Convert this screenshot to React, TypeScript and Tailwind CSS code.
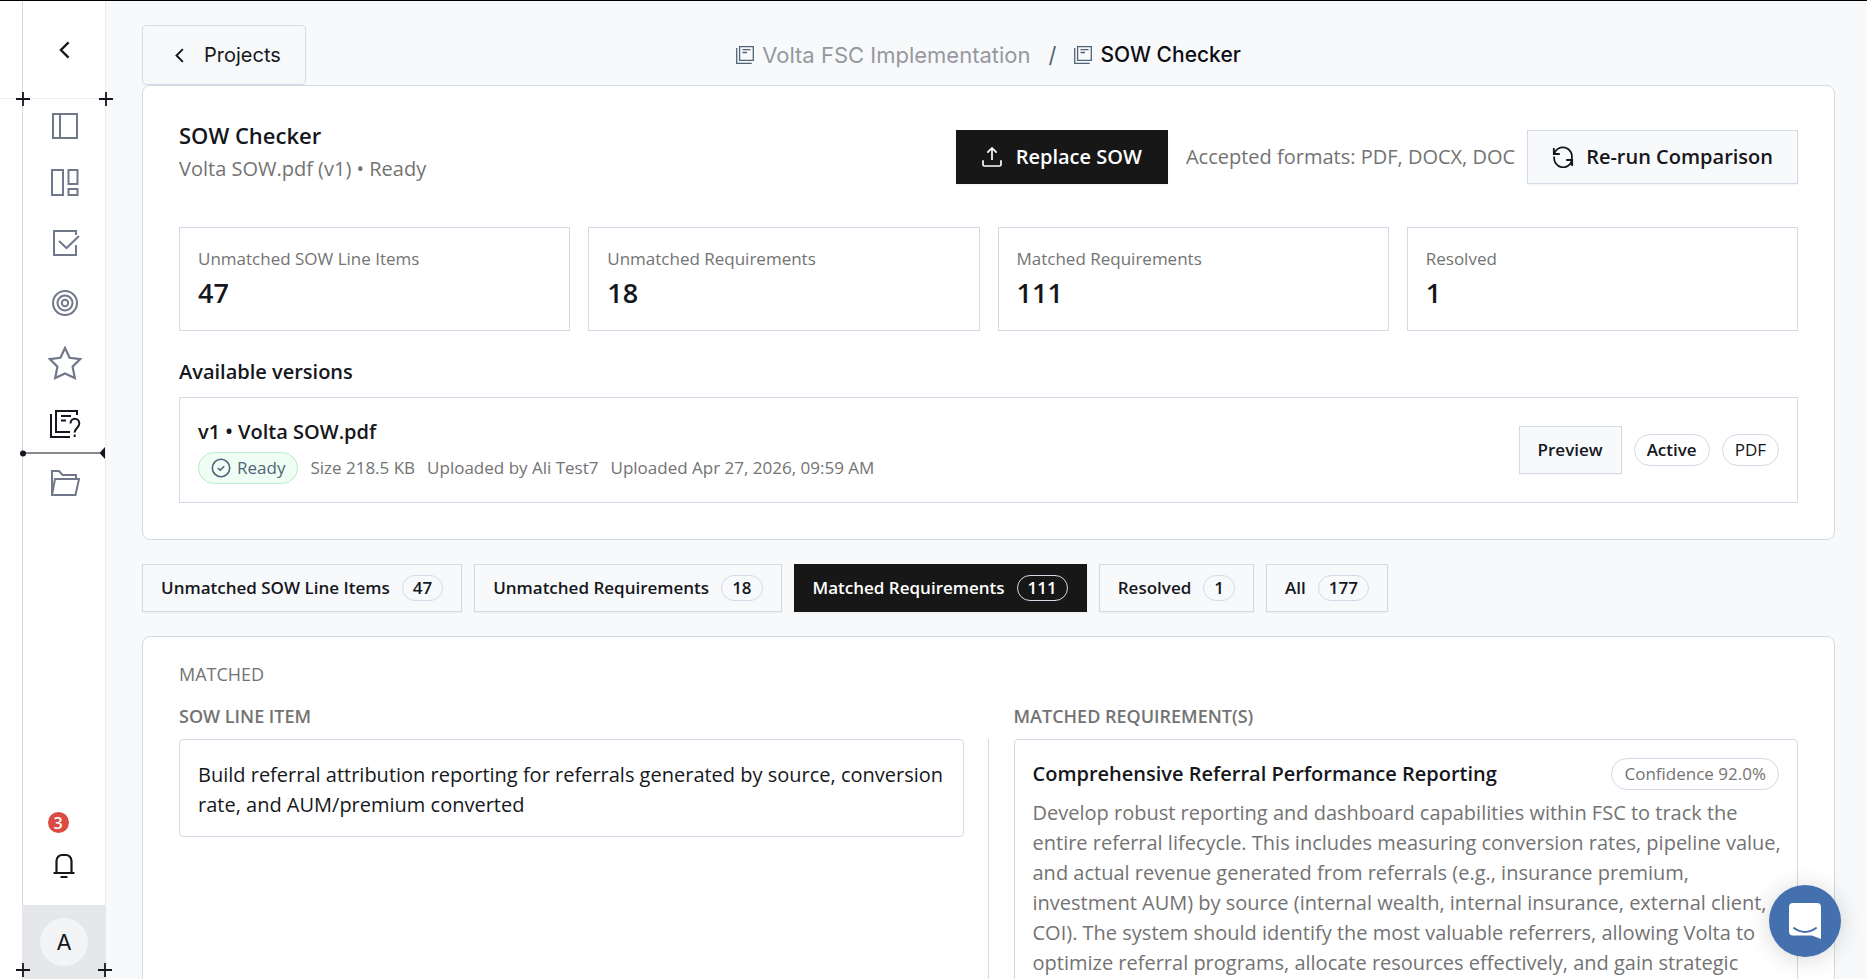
import React from "react";

type IconProps = { className?: string };

function Svg({ box, className, width = 2, children }: { box: string; className?: string; width?: number; children: React.ReactNode }) {
  return (
    <svg viewBox={box} className={className} fill="none" stroke="currentColor" strokeWidth={width} aria-hidden="true">
      {children}
    </svg>
  );
}

const Chevron = ({ className }: IconProps) => (
  <Svg box="0 0 12 20" className={className} width={2.6}><path d="M10.500 1.500 2 10l8.500 8.500" /></Svg>
);

const Panel = () => (
  <Svg box="0 0 30 30" className="size-[30px]">
    <path d="M3 3h24v24H3zM10 3v24" />
  </Svg>
);
const Dashboard = () => (
  <Svg box="0 0 30 30" className="size-[30px]">
    <path d="M2 2h11v25H2zM18.500 2h9v14h-9zM18.500 21h9v6h-9z" />
  </Svg>
);
const CheckSquare = () => (
  <Svg box="0 0 30 30" className="size-[30px]">
    <path d="M26 7V3H4v24h22V17M9 13l7.500 7L29 8" />
  </Svg>
);
const Target = () => (
  <Svg box="0 0 30 30" className="size-[30px]">
    <circle cx="15" cy="15" r="12" />
    <circle cx="15" cy="15" r="7.500" />
    <circle cx="15" cy="15" r="3.200" />
  </Svg>
);
const Star = () => (
  <Svg box="0 0 36 36" className="size-9" width={2.2}>
    <path d="m18 3 4.600 9.800 10.600 1.300-7.600 7.600 2.200 11.300L18 28.400 8.200 33l2.200-11.300-7.600-7.600 10.600-1.300z" />
  </Svg>
);
const DocQuestion = () => (
  <Svg box="0 0 32 32" className="size-8">
    <path d="M28 8V4H7v21h14M2 7v23h19M12 9h10M12 13.500h5" />
    <path d="M21.500 16.500c0-6.500 8.800-6.500 8.800 0 0 4.500-4.600 4.500-4.600 9M25.700 27.500V30" />
  </Svg>
);
const Folder = () => (
  <Svg box="0 0 32 32" className="size-8">
    <path d="M3 28V4h7l3.500 4H27v4M3 28 6 12h24l-3.500 16z" />
  </Svg>
);
const Bell = () => (
  <Svg box="0 0 24 26" className="h-[26px] w-6" width={2.2}>
    <path d="M4.500 19V8c0-3.500 2.500-6 5.500-6h4c3 0 5.500 2.500 5.500 6v11M1.500 20h21M8.500 24h7" />
  </Svg>
);
const Docs = () => (
  <Svg box="0 0 18 18" className="size-[18px] text-[#4f6478]" width={1.3}>
    <path d="M3.600.7h13.700v13.600H3.600zM.7 2v15.300h15M6.500 3.700h8M6.500 6.500h4.500" />
  </Svg>
);
const Upload = () => (
  <Svg box="0 0 20 20" className="size-5" width={1.7}>
    <path d="M10 13V1.200M5.300 5.700 10 1l4.700 4.700M1 13.300v4.200c0 .8.500 1.500 1.500 1.500h15c1 0 1.500-.7 1.500-1.500v-4.200" />
  </Svg>
);
const Refresh = () => (
  <Svg box="0 0 22 22" className="size-[22px]" width={1.8}>
    <path d="M1.800 2v6h6M2 8a9 9 0 0 1 17.600 5M20.200 20v-6h-6M20 14A9 9 0 0 1 2.300 10.500" />
  </Svg>
);
const ReadyCheck = () => (
  <Svg box="0 0 20 20" className="size-5 text-[#4f6478]" width={1.6}>
    <circle cx="10" cy="10" r="8.700" /><path d="m6.800 10 2.400 2.200 4-4" />
  </Svg>
);

const Plus = ({ className }: IconProps) => (
  <Svg box="0 0 14 14" className={`absolute size-[14px] text-[#15171c] ${className}`} width={1.8}>
    <path d="M7 0v14M0 7h14" />
  </Svg>
);

const nav = [
  { label: "Overview", icon: <Panel />, first: true },
  { label: "Dashboard", icon: <Dashboard /> },
  { label: "Tasks", icon: <CheckSquare /> },
  { label: "Goals", icon: <Target /> },
  { label: "Favorites", icon: <Star /> },
  { label: "SOW Checker", icon: <DocQuestion />, active: true },
  { label: "Files", icon: <Folder /> },
];

function Sidebar() {
  return (
    <aside className="relative ml-[22px] flex w-[84px] shrink-0 flex-col border-x border-r-[#ebecef] border-l-[#d3dae6] bg-white">
      <div className="-ml-[23px] flex h-[98px] items-center justify-center border-b border-[#ebecef] pl-[23px]">
        <button aria-label="Collapse sidebar" className="flex size-10 items-center justify-center text-[#15171c]">
          <Chevron className="h-[18px] w-[11px]" />
        </button>
      </div>
      <Plus className="-left-[7px] top-[91px]" />
      <Plus className="-right-[8px] top-[91px]" />
      <nav className="flex flex-col">
        {nav.map((n) => (
          <a
            key={n.label}
            href="#"
            aria-label={n.label}
            className={`relative flex items-center justify-center pl-px ${n.first ? "h-[54px]" : "h-[60px]"} ${n.active ? "text-[#15171c]" : "text-[#70788a]"}`}
          >
            {n.icon}
            {n.active && (
              <svg viewBox="0 0 86 12" className="absolute -bottom-[6px] -left-[3px] h-3 w-[86px] text-[#15171c]" fill="currentColor" aria-hidden="true">
                <circle cx="3" cy="6.500" r="3" />
                <path d="M3 5.500h78v1H3zM79.500 6l5.500-6v12z" />
              </svg>
            )}
          </a>
        ))}
      </nav>
      <div className="mt-auto flex flex-col items-center">
        <button aria-label="Notifications, 3 unread" className="flex flex-col items-center gap-5 pb-[26px] text-[#15171c]">
          <span className="mr-3 flex size-[21px] items-center justify-center rounded-full bg-[#db4a43] font-['Open_Sans',sans-serif] text-base font-semibold text-white">3</span>
          <Bell />
        </button>
      </div>
      <div className="-mx-px flex h-[74px] justify-center bg-[#e5e7eb] pt-[13px]">
        <button aria-label="Account" className="flex size-12 items-center justify-center rounded-full bg-[#f3f4f6] font-['Inter',sans-serif] text-[22px] text-[#15171c]">
          A
        </button>
      </div>
      <Plus className="-left-[7px] bottom-[2px]" />
      <Plus className="-right-[7px] bottom-[2px]" />
    </aside>
  );
}

const stats = [
  ["Unmatched SOW Line Items", "47"],
  ["Unmatched Requirements", "18"],
  ["Matched Requirements", "111"],
  ["Resolved", "1"],
];

const tabs = [...stats, ["All", "177"]];

const description = [
  "Develop robust reporting and dashboard capabilities within FSC to track the",
  "entire referral lifecycle. This includes measuring conversion rates, pipeline value,",
  "and actual revenue generated from referrals (e.g., insurance premium,",
  "investment AUM) by source (internal wealth, internal insurance, external client,",
  "COI). The system should identify the most valuable referrers, allowing Volta to",
  "optimize referral programs, allocate resources effectively, and gain strategic",
];

const line = "border border-[#d3dae6]";
const pill = `${line} flex h-8 items-center rounded-full px-3`;

function Header() {
  return (
    <header className="grid grid-cols-[1fr_auto_1fr] items-center font-['Inter',sans-serif]">
      <a href="#" className={`${line} flex h-[60px] items-center gap-5 justify-self-start rounded-sm bg-[#f7f8fa] pr-6 pl-8 text-xl text-[#15171c]`}>
        <Chevron className="h-[15px] w-[9px]" />
        Projects
      </a>
      <nav aria-label="Breadcrumb" className="flex items-center">
        <a href="#" className="flex items-center gap-2 text-[22px] text-[#95999f]"><Docs />Volta FSC Implementation</a>
        <span className="mx-[18px] text-[22px] text-[#4f6478]">/</span>
        <span className="flex items-center gap-2 text-[21px] font-medium text-[#0c0e14]"><Docs />SOW Checker</span>
      </nav>
    </header>
  );
}

function Summary() {
  return (
    <section className={`${line} rounded-lg bg-white p-9`}>
      <div className="flex h-[70px] items-center justify-between">
        <div className="self-start">
          <h1 className="text-[22px] leading-[26px] font-semibold">SOW Checker</h1>
          <p className="mt-[6px] text-xl leading-[30px] text-[#737373]">Volta SOW.pdf (v1) • Ready</p>
        </div>
        <div className="flex items-center gap-3 text-xl">
          <button className="flex h-[54px] items-center gap-[14px] bg-[#171717] px-[26px] font-semibold text-white shadow-xs"><Upload />Replace SOW</button>
          <span className="ml-[6px] text-[#737373]">Accepted formats: PDF, DOCX, DOC</span>
          <button className={`${line} flex h-[54px] items-center gap-3 bg-[#f8f9fb] px-6 font-semibold shadow-xs`}><Refresh />Re-run Comparison</button>
        </div>
      </div>

      <dl className="mt-[35px] grid grid-cols-4 gap-[18px]">
        {stats.map(([label, value]) => (
          <div key={label} className={`${line} p-[18px]`}>
            <dt className="text-[17px] leading-[25px] text-[#737373]">{label}</dt>
            <dd className="mt-1 mb-[2px] text-[27px] leading-[35px] font-semibold">{value}</dd>
          </div>
        ))}
      </dl>

      <h2 className="mt-[26px] text-xl leading-[30px] font-semibold">Available versions</h2>
      <div className={`${line} mt-[10px] flex items-center justify-between p-[18px]`}>
        <div>
          <h3 className="text-xl leading-8 font-semibold">v1 • Volta SOW.pdf</h3>
          <div className="mt-1 flex items-center gap-3 text-[17px] text-[#737373]">
            <span className="flex h-8 items-center gap-[6px] rounded-full border border-[#b9ebcb] bg-[#f0fdf4] px-3 text-[#4f6478]"><ReadyCheck />Ready</span>
            <span>Size 218.5 KB</span>
            <span>Uploaded by Ali Test7</span>
            <span>Uploaded Apr 27, 2026, 09:59 AM</span>
          </div>
        </div>
        <div className="flex items-center gap-3 text-[17px]">
          <button className={`${line} h-12 bg-[#f8f9fb] px-[18px] font-semibold shadow-xs`}>Preview</button>
          <span className={`${pill} font-semibold`}>Active</span>
          <span className={pill}>PDF</span>
        </div>
      </div>
    </section>
  );
}

function Tabs() {
  return (
    <div role="tablist" className="mt-6 flex gap-3 text-[17px] font-semibold">
      {tabs.map(([label, count]) => {
        const on = label === "Matched Requirements";
        return (
          <button
            key={label}
            role="tab"
            aria-selected={on}
            className={`flex h-12 items-center gap-3 border px-[18px] shadow-xs ${on ? "border-[#171717] bg-[#171717] text-white" : "border-[#d3dae6] bg-[#f8f9fb]"}`}
          >
            {label}
            <span className="flex h-[26px] items-center rounded-full border border-[#d3dae6] px-[10px]">{count}</span>
          </button>
        );
      })}
    </div>
  );
}

function Matches() {
  return (
    <section className={`${line} mt-6 rounded-t-lg bg-white px-9 pt-6 pb-9`}>
      <p className="text-lg leading-[26px] text-[#737373]">MATCHED</p>
      <div className="mt-4 grid grid-cols-[1fr_50px_1fr] grid-rows-[26px_auto] gap-y-[10px]">
        <h2 className="text-lg leading-[26px] font-semibold text-[#737373]">SOW LINE ITEM</h2>
        <h2 className="col-start-3 text-lg leading-[26px] font-semibold text-[#737373]">MATCHED REQUIREMENT(S)</h2>
        <p className={`${line} self-start rounded-sm px-[18px] pt-5 pb-4 text-xl leading-[30px]`}>
          Build referral attribution reporting for referrals generated by source, conversion rate, and AUM/premium converted
        </p>
        <div className="justify-self-center border-l border-[#d3dae6]" />
        <article className={`${line} min-w-0 rounded-sm p-[18px] text-xl`}>
          <div className="flex items-center justify-between">
            <h3 className="font-semibold">Comprehensive Referral Performance Reporting</h3>
            <span className={`${pill} text-[17px] text-[#737373]`}>Confidence 92.0%</span>
          </div>
          <p className="mt-2 leading-[30px] whitespace-nowrap text-[#737373]">
            {description.map((d) => <span key={d} className="block">{d}</span>)}
          </p>
        </article>
      </div>
    </section>
  );
}

export default function App() {
  return (
    <div className="flex h-screen overflow-hidden border-t border-black bg-white font-['Open_Sans',sans-serif] text-[#15171c]">
      <Sidebar />
      <main className="min-w-0 flex-1 overflow-hidden bg-[#f8f9fb] pt-6 pr-8 pl-9">
        <Header />
        <Summary />
        <Tabs />
        <Matches />
      </main>
      <button aria-label="Open chat" className="fixed right-[26px] bottom-[22px] flex size-[72px] items-center justify-center rounded-full bg-[#4470ad] shadow-[0_2px_24px_rgba(0,0,0,0.16)]">
        <svg viewBox="0 0 32 36" className="h-9 w-8" fill="none" aria-hidden="true">
          <path d="M4 0h24a4 4 0 0 1 4 4v32l-9-3.500H4a4 4 0 0 1-4-4V4a4 4 0 0 1 4-4z" fill="#fff" />
          <path d="M5 25c6.500 5.200 15.500 5.200 22 0" stroke="#4470ad" strokeWidth="2" strokeLinecap="round" />
        </svg>
      </button>
    </div>
  );
}
